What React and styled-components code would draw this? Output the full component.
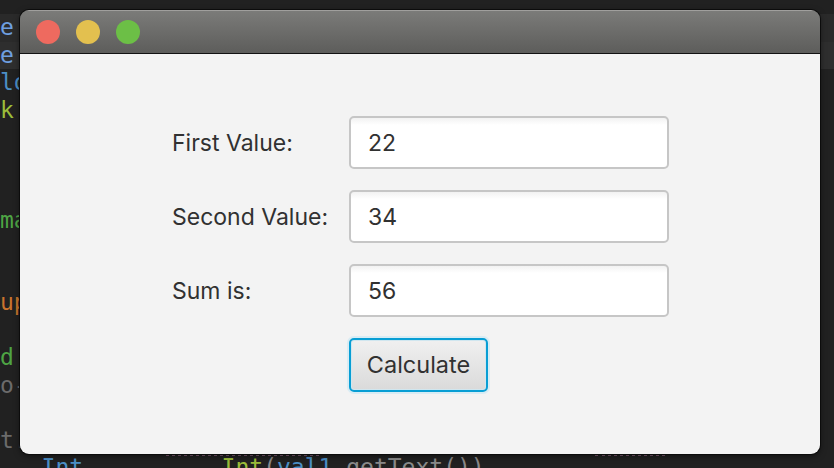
import React from "react";
import styled, { createGlobalStyle } from "styled-components";

const Global = createGlobalStyle`
  html, body { margin: 0; padding: 0; background: #212121; }
  body { width: 834px; height: 468px; overflow: hidden; }
  #root { width: 834px; height: 468px; }
`;

const Desktop = styled.div`
  position: relative;
  width: 834px;
  height: 468px;
  overflow: hidden;
  background: #212121;
`;

const Editor = styled.div`
  display: flex;
  flex-direction: column;
  padding-top: 14px;
  font-family: "DejaVu Sans Mono", "Liberation Mono", monospace;
  font-size: 23px;
`;

const Line = styled.div`
  height: 27.5px;
  line-height: 27.5px;
  white-space: pre;
  color: #8a8a8a;
  background: ${(p) => p.$bg || "transparent"};
`;

const Tok = styled.span`
  color: ${(p) => p.$c};
  border-bottom: ${(p) => (p.$dots ? "3px dotted #7d5a70" : "none")};
`;

const Window = styled.div`
  position: absolute;
  left: 20px;
  top: 10px;
  width: 800px;
  height: 444px;
  display: flex;
  flex-direction: column;
  border-radius: 9px;
  overflow: hidden;
  box-shadow: 0 0 0 1px #0c0c0c, 0 2px 6px rgba(0, 0, 0, 0.5);
`;

const TitleBar = styled.div`
  flex: none;
  display: flex;
  align-items: center;
  gap: 16px;
  padding-left: 16px;
  background: linear-gradient(#7b7b79, #5d5d5b);
  border-top: 1px solid #a09f9d;
  border-bottom: 1px solid #121212;
  box-sizing: border-box;
  height: 44px;
`;

const Light = styled.span`
  width: 24px;
  height: 24px;
  border-radius: 50%;
  background: ${(p) => p.$c};
`;

const Content = styled.div`
  flex: 1;
  background: #f3f3f3;
  padding: 62px 0 0 152px;
  font-family: Inter, "Noto Sans", sans-serif;
  color: #313131;
`;

const Form = styled.div`
  display: grid;
  grid-template-columns: 177px 320px;
  grid-auto-rows: 53px;
  row-gap: 21px;
  align-items: center;
`;

const Label = styled.label`
  font-size: 23px;
`;

const Field = styled.input`
  box-sizing: border-box;
  width: 320px;
  height: 53px;
  border: 2px solid #c6c6c6;
  border-radius: 5px;
  padding: 0 0 0 17px;
  font-family: Inter, "Noto Sans", sans-serif;
  font-size: 23px;
  color: #313131;
  background: linear-gradient(#f2f2f2, #ffffff 7px, #ffffff);
  outline: none;
`;

const Button = styled.button`
  grid-column: 2;
  justify-self: start;
  box-sizing: border-box;
  width: 139px;
  height: 54px;
  border: 2px solid #089ed4;
  border-radius: 5px;
  box-shadow: inset 0 0 0 1px #d0e6ef, 0 0 0 2px #d8ecf4;
  background: linear-gradient(#f0f0f0, #dadada);
  font-family: Inter, "Noto Sans", sans-serif;
  font-size: 23.5px;
  color: #313131;
  padding: 0;
`;

const lines = [
  { bg: "#2a2a2a", t: [["e", "#6e9fe0"]] },
  { bg: "#2e2e2e", t: [["e", "#6e9fe0"]] },
  { t: [["lo", "#4c8fc6"]] },
  { t: [["k'", "#9bbd3a"]] },
  { t: [] },
  { t: [] },
  { t: [] },
  { t: [["ma", "#4ea444"]] },
  { t: [] },
  { t: [] },
  { t: [["up", "#c9742d"]] },
  { t: [] },
  { t: [["d", "#4ea444"]] },
  { t: [["o-", "#6b6b6b"]] },
  { t: [] },
  {
    t: [
      ["t.", "#6b6b6b"],
      ["          ", ""],
      ["resultValue", "#8a8a8a", true],
      ["                    ", ""],
      ["value", "#8a8a8a", true],
    ],
  },
  { t: [["   ", ""], ["Int", "#4c8fc6"], ["          ", ""], ["Int", "#9bbd3a"], ["(", "#8a8a8a"], ["val1", "#4c8fc6"], [".getText())", "#8a8a8a"]] },
];

export default function App() {
  return (
    <Desktop>
      <Global />
      <Editor>
        {lines.map((l, i) => (
          <Line key={i} $bg={l.bg}>
            {l.t.map(([s, c, d], j) => (
              <Tok key={j} $c={c || "inherit"} $dots={d}>{s}</Tok>
            ))}
          </Line>
        ))}
      </Editor>
      <Window>
        <TitleBar>
          <Light $c="#ee6a5f" />
          <Light $c="#e3c04f" />
          <Light $c="#6cbf46" />
        </TitleBar>
        <Content>
          <Form>
            <Label>First Value:</Label>
            <Field defaultValue="22" />
            <Label>Second Value:</Label>
            <Field defaultValue="34" />
            <Label>Sum is:</Label>
            <Field defaultValue="56" />
            <Button>Calculate</Button>
          </Form>
        </Content>
      </Window>
    </Desktop>
  );
}
